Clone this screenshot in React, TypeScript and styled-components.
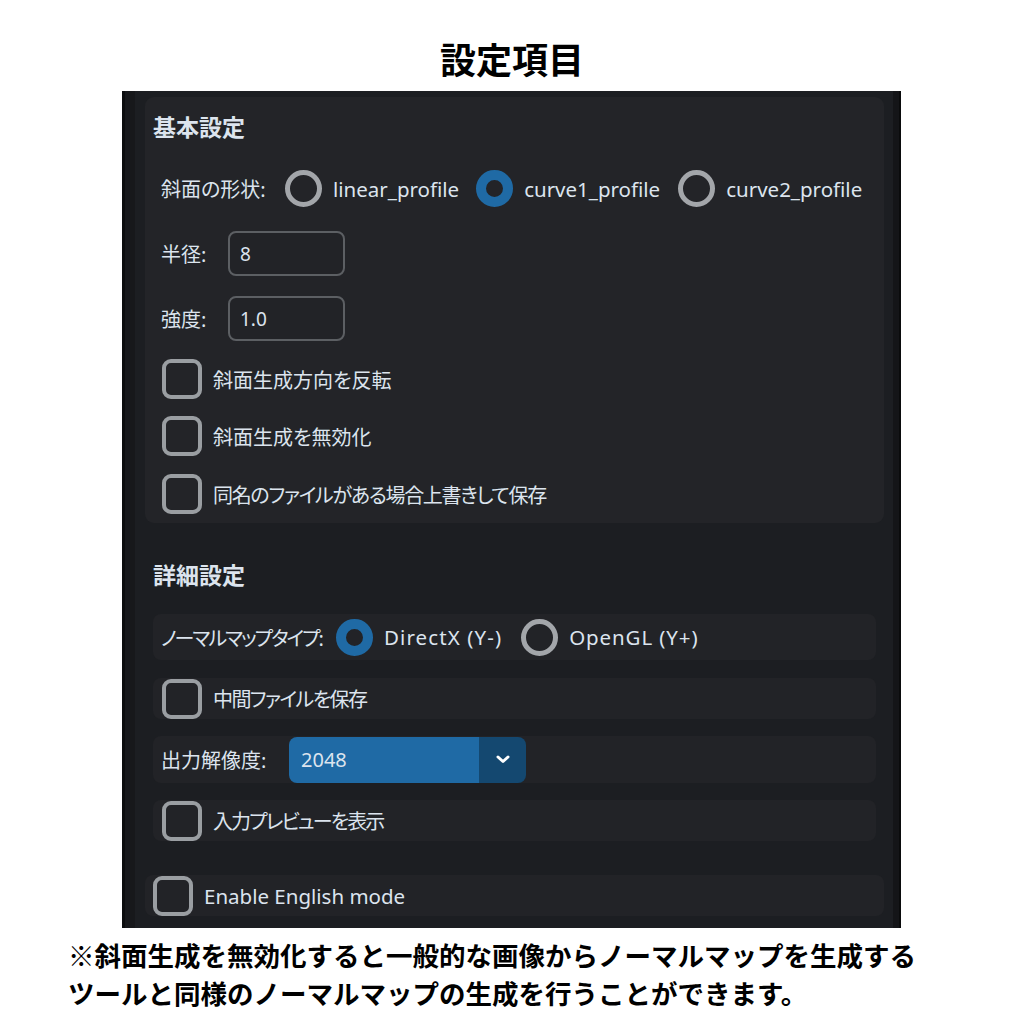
import React from "react";
import styled, { createGlobalStyle } from "styled-components";

const Global = createGlobalStyle`
  html, body { margin: 0; padding: 0; background: #ffffff; }
  body { font-family: "Noto Sans", "Noto Sans CJK JP", sans-serif; }
`;

const Page = styled.div`
  width: 1024px;
  height: 1024px;
  overflow: hidden;
  background: #ffffff;
`;

const Title = styled.h1`
  margin: 0;
  padding-top: 36px;
  height: 44px;
  text-align: center;
  font: 700 36px/44px "Noto Sans CJK JP", sans-serif;
  color: #000;
`;

const Panel = styled.div`
  margin: 11px 0 0 122px;
  width: 779px;
  box-sizing: border-box;
  background: #1c1e22;
  border-left: 3px solid #0c0d0f;
  border-right: 2px solid #0a0b0c;
  display: flex;
`;

const LeftStrip = styled.div`
  width: 10px;
  flex: none;
  background: #17181b;
`;

const RightStrip = styled.div`
  width: 6px;
  flex: none;
  background: #141518;
`;

const Content = styled.div`
  flex: 1;
  padding: 6px 9px 12px 10px;
  display: flex;
  flex-direction: column;
`;

const Group = styled.div`
  background: #232428;
  border-radius: 9px;
  padding: 15px 8px 9px 8px;
  display: flex;
  flex-direction: column;
`;

const Section = styled.div`
  padding: 0 8px;
  display: flex;
  flex-direction: column;
`;

const SectionTitle = styled.div<{ $mt?: number }>`
  margin-top: ${(p) => p.$mt ?? 0}px;
  font: 700 23px/30px "Noto Sans", "Noto Sans CJK JP", sans-serif;
  color: #dce4ee;
  font-feature-settings: "palt";
`;

const Row = styled.div<{ $mt: number; $h: number; $pl: number }>`
  margin-top: ${(p) => p.$mt}px;
  height: ${(p) => p.$h}px;
  padding-left: ${(p) => p.$pl}px;
  display: flex;
  align-items: center;
`;

const Card = styled(Row)`
  background: #222327;
  border-radius: 8px;
`;

const FieldLabel = styled.span<{ $w: number; $ls?: number }>`
  width: ${(p) => p.$w}px;
  flex: none;
  font-size: 20px;
  color: #dce4ee;
  font-feature-settings: "palt";
  letter-spacing: ${(p) => p.$ls ?? 0}px;
  white-space: nowrap;
`;

const Option = styled.div<{ $gap: number }>`
  display: flex;
  align-items: center;
  margin-right: ${(p) => p.$gap}px;
`;

const Radio = styled.span<{ $checked?: boolean }>`
  width: 37px;
  height: 37px;
  box-sizing: border-box;
  border-radius: 50%;
  border: ${(p) => (p.$checked ? "10px solid #1f6aa5" : "5px solid #a3a6aa")};
  flex: none;
`;

const OptionText = styled.span<{ $ls?: number }>`
  margin-left: 11px;
  font-size: 20.5px;
  color: #dce4ee;
  letter-spacing: ${(p) => p.$ls ?? 0}px;
  white-space: nowrap;
`;

const TextInput = styled.input`
  width: 117px;
  height: 45px;
  box-sizing: border-box;
  border: 2px solid #5c5f63;
  border-radius: 8px;
  background: #222327;
  color: #dce4ee;
  font: 400 19px "Noto Sans", sans-serif;
  padding: 0 10px;
  outline: none;
`;

const Check = styled.span`
  width: 40px;
  height: 40px;
  box-sizing: border-box;
  border: 4px solid #9a9ea2;
  border-radius: 9px;
  flex: none;
`;

const CheckText = styled.span<{ $ls?: number; $latin?: boolean }>`
  margin-left: 11px;
  font-size: ${(p) => (p.$latin ? 20.5 : 20)}px;
  color: #dce4ee;
  font-feature-settings: "palt";
  letter-spacing: ${(p) => p.$ls ?? 0}px;
  white-space: nowrap;
`;

const Select = styled.div`
  width: 237px;
  height: 46px;
  border-radius: 8px;
  overflow: hidden;
  display: flex;
`;

const SelectValue = styled.div`
  flex: 1;
  background: #1f6aa5;
  color: #dce4ee;
  font-size: 20px;
  display: flex;
  align-items: center;
  padding-left: 12px;
`;

const SelectButton = styled.div`
  width: 47px;
  background: #144870;
  display: flex;
  align-items: center;
  justify-content: center;
`;

const Footer = styled.div`
  margin-top: 8px;
  padding-left: 68px;
  font: 700 26.5px/38px "Noto Sans CJK JP", sans-serif;
  color: #000;
  white-space: nowrap;
`;

const RadioOption = ({
  checked,
  label,
  gap,
  ls,
}: {
  checked?: boolean;
  label: string;
  gap: number;
  ls?: number;
}) => (
  <Option $gap={gap}>
    <Radio $checked={checked} />
    <OptionText $ls={ls}>{label}</OptionText>
  </Option>
);

const CheckItem = ({ label, ls, latin }: { label: string; ls?: number; latin?: boolean }) => (
  <>
    <Check />
    <CheckText $ls={ls} $latin={latin}>
      {label}
    </CheckText>
  </>
);

export default function App() {
  return (
    <Page>
      <Global />
      <Title>設定項目</Title>
      <Panel>
        <LeftStrip />
        <Content>
          <Group>
            <SectionTitle>基本設定</SectionTitle>
            <Row $mt={28} $h={37} $pl={8}>
              <FieldLabel $w={124}>斜面の形状:</FieldLabel>
              <RadioOption label="linear_profile" gap={17} />
              <RadioOption label="curve1_profile" checked gap={18} />
              <RadioOption label="curve2_profile" gap={0} />
            </Row>
            <Row $mt={24} $h={45} $pl={8}>
              <FieldLabel $w={67}>半径:</FieldLabel>
              <TextInput defaultValue="8" readOnly />
            </Row>
            <Row $mt={20} $h={45} $pl={8}>
              <FieldLabel $w={67}>強度:</FieldLabel>
              <TextInput defaultValue="1.0" readOnly />
            </Row>
            <Row $mt={18} $h={40} $pl={9}>
              <CheckItem label="斜面生成方向を反転" />
            </Row>
            <Row $mt={17} $h={40} $pl={9}>
              <CheckItem label="斜面生成を無効化" />
            </Row>
            <Row $mt={18} $h={40} $pl={9}>
              <CheckItem label="同名のファイルがある場合上書きして保存" ls={-1.3} />
            </Row>
          </Group>
          <Section>
            <SectionTitle $mt={37}>詳細設定</SectionTitle>
            <Card $mt={24} $h={46} $pl={8}>
              <FieldLabel $w={175} $ls={-2}>
                ノーマルマップタイプ:
              </FieldLabel>
              <RadioOption label="DirectX (Y-)" checked gap={19} ls={1.1} />
              <RadioOption label="OpenGL (Y+)" gap={0} ls={0.9} />
            </Card>
            <Card $mt={18} $h={41} $pl={9}>
              <CheckItem label="中間ファイルを保存" ls={-1.6} />
            </Card>
            <Card $mt={17} $h={47} $pl={8}>
              <FieldLabel $w={128}>出力解像度:</FieldLabel>
              <Select>
                <SelectValue>2048</SelectValue>
                <SelectButton>
                  <svg width="14" height="9" viewBox="0 0 14 9">
                    <path
                      d="M2 2 L7 6.5 L12 2"
                      fill="none"
                      stroke="#ffffff"
                      strokeWidth="3"
                      strokeLinecap="round"
                      strokeLinejoin="round"
                    />
                  </svg>
                </SelectButton>
              </Select>
            </Card>
            <Card $mt={17} $h={41} $pl={9}>
              <CheckItem label="入力プレビューを表示" ls={-1.9} />
            </Card>
          </Section>
          <Card $mt={34} $h={41} $pl={8}>
            <CheckItem label="Enable English mode" latin />
          </Card>
        </Content>
        <RightStrip />
      </Panel>
      <Footer>
        ※斜面生成を無効化すると一般的な画像からノーマルマップを生成する
        <br />
        ツールと同様のノーマルマップの生成を行うことができます。
      </Footer>
    </Page>
  );
}
